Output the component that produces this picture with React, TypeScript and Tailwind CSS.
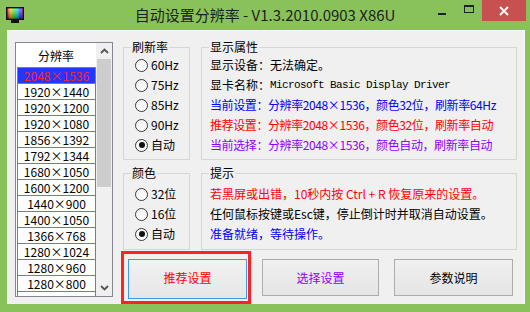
const resolutions = [
  "2048×1536",
  "1920×1440",
  "1920×1200",
  "1920×1080",
  "1856×1392",
  "1792×1344",
  "1680×1050",
  "1600×1200",
  "1440×900",
  "1400×1050",
  "1366×768",
  "1280×1024",
  "1280×960",
  "1280×800",
  "1280×768",
];

function Radio({ label, checked }: { label: string; checked?: boolean }) {
  return (
    <div className="flex items-center h-[20px] gap-[3px]">
      <span className="w-[13px] h-[13px] rounded-full border border-[#3a3a3a] bg-linear-to-b from-[#f4f4f4] to-[#ffffff] flex items-center justify-center">
        {checked && <span className="w-[6px] h-[6px] rounded-full bg-[#111]" />}
      </span>
      <span>{label}</span>
    </div>
  );
}

function Group({
  title,
  className,
  children,
}: {
  title: string;
  className: string;
  children: React.ReactNode;
}) {
  return (
    <fieldset className={`border border-[#d6d6d6] px-[7px] ${className}`}>
      <legend className="px-[1px] text-[12px] leading-[16px] text-black">{title}</legend>
      {children}
    </fieldset>
  );
}

function AppIcon() {
  return (
    <svg width="20" height="16" viewBox="0 0 20 16">
      <defs>
        <linearGradient id="rb" x1="0" y1="0" x2="1" y2="0">
          <stop offset="0" stopColor="#ff0040" />
          <stop offset="0.2" stopColor="#ffd000" />
          <stop offset="0.45" stopColor="#30ff30" />
          <stop offset="0.65" stopColor="#00e0ff" />
          <stop offset="0.85" stopColor="#2040ff" />
          <stop offset="1" stopColor="#e000ff" />
        </linearGradient>
        <linearGradient id="sh" x1="0" y1="0" x2="0" y2="1">
          <stop offset="0" stopColor="#fff" stopOpacity="0.35" />
          <stop offset="1" stopColor="#000" stopOpacity="0.45" />
        </linearGradient>
      </defs>
      <rect x="1" y="0" width="18" height="13" fill="#111" />
      <rect x="2.5" y="1.5" width="15" height="10" fill="url(#rb)" />
      <rect x="2.5" y="1.5" width="15" height="10" fill="url(#sh)" />
      <rect x="6" y="13" width="8" height="3" fill="#111" />
    </svg>
  );
}

export default function App() {
  return (
    <div className="w-[530px] h-[312px] bg-[#89c25b] flex flex-col font-['Noto_Sans_CJK_SC',sans-serif] text-black overflow-hidden">
      {/* title bar */}
      <div className="h-[30px] grid grid-cols-[1fr_auto_1fr]">
        <div className="pl-[5px] pt-[7px]">
          <AppIcon />
        </div>
        <div className="pt-[5px] text-[15px] leading-[20px] text-[#1e1e1e]">
          自动设置分辨率 - V1.3.2010.0903 X86U
        </div>
        <div className="flex justify-end items-start pr-[4px]">
          <div className="w-[27px] h-[21px] flex items-center justify-center">
            <span className="w-[8px] h-[2px] bg-[#222] mt-[6px]" />
          </div>
          <div className="w-[27px] h-[21px] flex items-center justify-center">
            <span className="w-[10px] h-[8px] border border-t-2 border-[#222] -mt-[3px]" />
          </div>
          <div className="w-[44px] h-[21px] bg-[#c75050] flex items-center justify-center text-white">
            <svg width="10" height="10" viewBox="0 0 10 10">
              <path d="M1 1 L9 9 M9 1 L1 9" stroke="#fff" strokeWidth="1.8" />
            </svg>
          </div>
        </div>
      </div>

      {/* client */}
      <div className="ml-[7px] mr-[5px] h-[274px] bg-[#f0f0f0] border-t border-r border-[#fafafa] flex pl-[8px] pt-[8px] text-[12px] leading-[20px]">
        {/* list box */}
        <div className="mt-[3px] w-[98px] h-[255px] border border-[#828790] bg-white flex overflow-hidden">
          <div className="w-[80px] flex flex-col">
            <div className="h-[24px] shrink-0 flex items-center justify-center pt-[1px]">分辨率</div>
            <div className="pl-[1px]">
              {resolutions.map((r, i) => (
                <div
                  key={r}
                  className={`h-[16px] border-t border-x border-[#6f6fe6] flex items-center justify-center leading-[15px] ${
                    i === 0 ? "bg-[#2238ff] text-[#ff2020]" : ""
                  }`}
                >
                  {r}
                </div>
              ))}
            </div>
          </div>
          <div className="w-[16px] bg-[#f0f0f0] flex flex-col">
            <div className="h-[16px] shrink-0 flex items-center justify-center">
              <svg width="9" height="6" viewBox="0 0 9 6">
                <path d="M1 5 L4.5 1.5 L8 5" fill="none" stroke="#555" strokeWidth="1.8" />
              </svg>
            </div>
            <div className="h-[128px] mx-[1px] bg-[#cdcdcd]" />
            <div className="flex-1" />
            <div className="h-[16px] shrink-0 flex items-center justify-center">
              <svg width="9" height="6" viewBox="0 0 9 6">
                <path d="M1 1 L4.5 4.5 L8 1" fill="none" stroke="#555" strokeWidth="1.8" />
              </svg>
            </div>
          </div>
        </div>

        {/* right area */}
        <div className="ml-[8px] flex flex-col">
          <div className="flex">
            <div className="ml-[2px] w-[67px] flex flex-col">
              <Group title="刷新率" className="h-[121px]">
                <div className="pl-[4px]">
                  <Radio label="60Hz" />
                  <Radio label="75Hz" />
                  <Radio label="85Hz" />
                  <Radio label="90Hz" />
                  <Radio label="自动" checked />
                </div>
              </Group>
              <Group title="颜色" className="mt-[5px] h-[85px]">
                <div className="pl-[4px] pt-[3px]">
                  <Radio label="32位" />
                  <Radio label="16位" />
                  <Radio label="自动" checked />
                </div>
              </Group>
            </div>
            <div className="ml-[11px] w-[316px] flex flex-col">
              <Group title="显示属性" className="h-[121px]">
                <div className="pl-[1px] whitespace-nowrap">
                  <div>显示设备：无法确定。</div>
                  <div className="flex items-center">
                    显卡名称：
                    <span className="font-['Liberation_Mono',monospace] text-[11px] tracking-[-0.6px]">
                      Microsoft Basic Display Driver
                    </span>
                  </div>
                  <div className="text-[#0000ff] tracking-[-0.4px]">当前设置：分辨率2048×1536，颜色32位，刷新率64Hz</div>
                  <div className="text-[#ff0000] tracking-[-0.4px]">推荐设置：分辨率2048×1536，颜色32位，刷新率自动</div>
                  <div className="text-[#9000ff] tracking-[-0.4px]">当前选择：分辨率2048×1536，颜色自动，刷新率自动</div>
                </div>
              </Group>
              <Group title="提示" className="mt-[5px] h-[85px]">
                <div className="pl-[1px] pt-[3px] whitespace-nowrap">
                  <div className="text-[#ff0000]">若黑屏或出错，10秒内按 Ctrl + R 恢复原来的设置。</div>
                  <div>任何鼠标按键或Esc键，停止倒计时并取消自动设置。</div>
                  <div className="text-[#0000ff]">准备就绪，等待操作。</div>
                </div>
              </Group>
            </div>
          </div>

          {/* buttons */}
          <div className="mt-[1px] flex items-start">
            <div className="border-[3px] border-[#ff2222] pl-[4px] pr-[1px] pt-[5px] pb-[2px]">
              <button className="w-[119px] h-[40px] pb-[3px] border border-[#3c9af0] bg-linear-to-b from-[#f2f2f2] to-[#e6e6e6] text-[#ff0000] text-[12px]">
                推荐设置
              </button>
            </div>
            <button className="ml-[11px] mt-[8px] w-[117px] h-[37px] border border-[#acacac] bg-linear-to-b from-[#f0f0f0] to-[#e5e5e5] text-[#9000ff] text-[12px]">
              选择设置
            </button>
            <button className="ml-[15px] mt-[8px] w-[119px] h-[37px] border border-[#acacac] bg-linear-to-b from-[#f0f0f0] to-[#e5e5e5] text-black text-[12px]">
              参数说明
            </button>
          </div>
        </div>
      </div>
    </div>
  );
}
